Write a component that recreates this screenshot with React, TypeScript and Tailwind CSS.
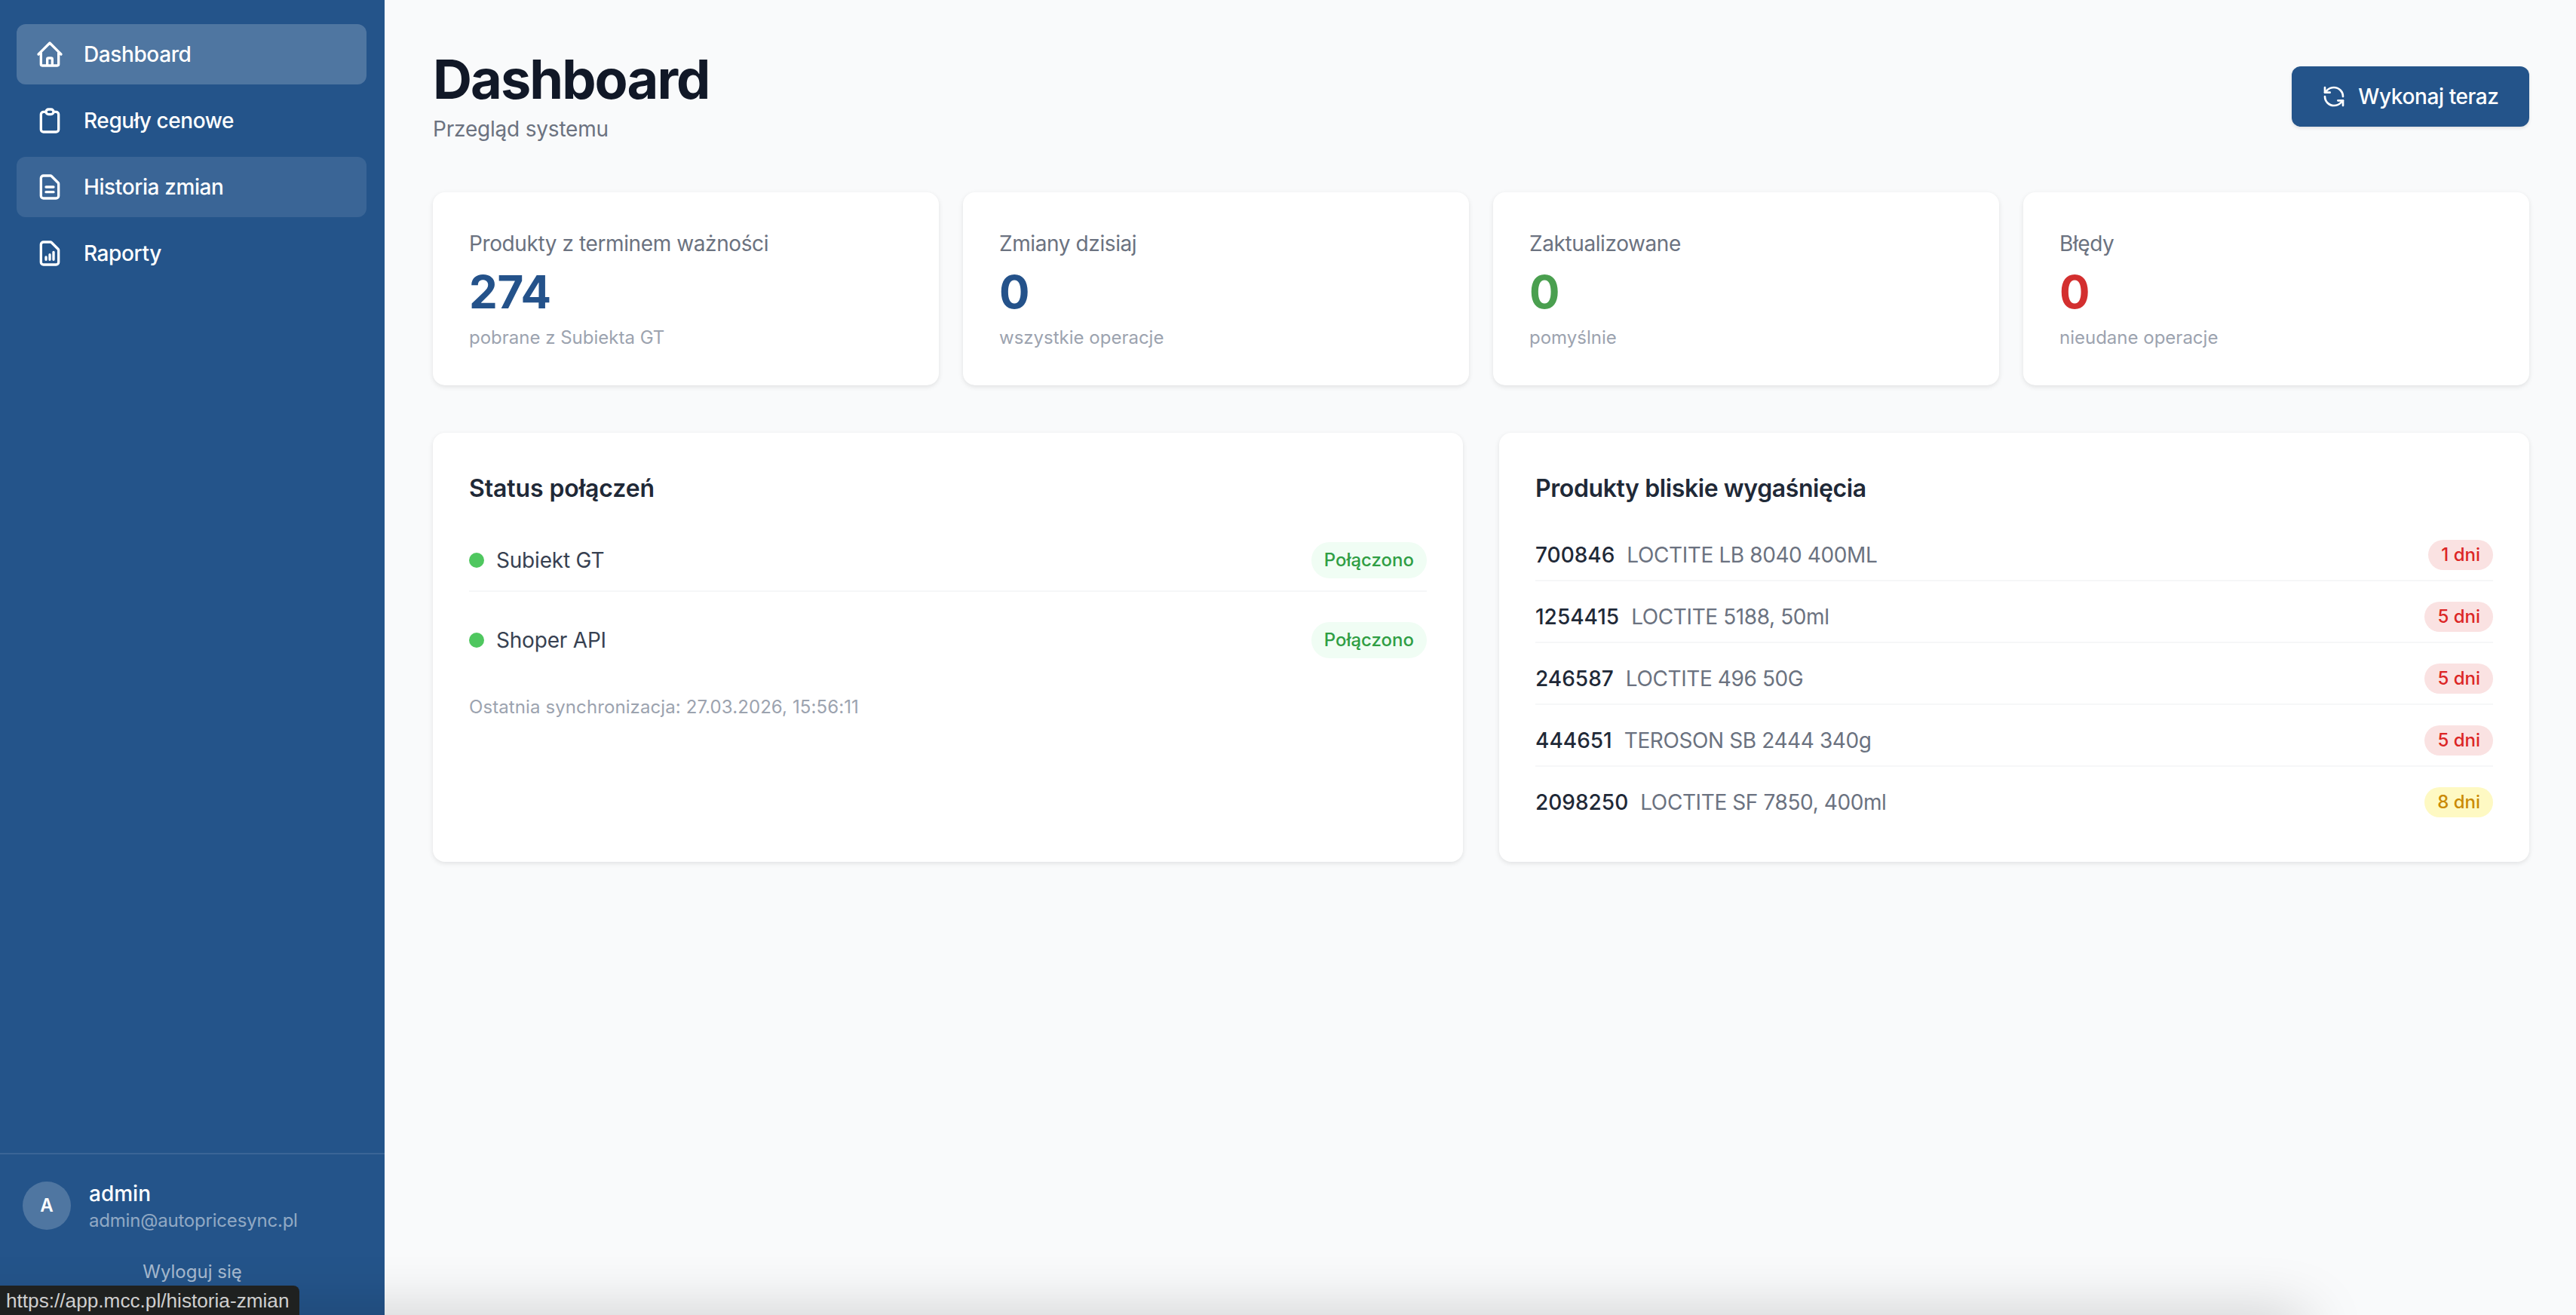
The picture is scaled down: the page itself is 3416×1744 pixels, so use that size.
import { RefreshCcw } from "lucide-react";

const NAV_ITEMS = [
  {
    label: "Dashboard",
    state: "active",
    d: "M3 12l2-2m0 0l7-7 7 7M5 10v10a1 1 0 001 1h3m10-11l2 2m-2-2v10a1 1 0 01-1 1h-3m-6 0a1 1 0 001-1v-4a1 1 0 011-1h2a1 1 0 011 1v4a1 1 0 001 1m-6 0h6",
  },
  {
    label: "Reguły cenowe",
    state: "",
    d: "M9 5H7a2 2 0 00-2 2v12a2 2 0 002 2h10a2 2 0 002-2V7a2 2 0 00-2-2h-2M9 5a2 2 0 002 2h2a2 2 0 002-2M9 5a2 2 0 012-2h2a2 2 0 012 2",
  },
  {
    label: "Historia zmian",
    state: "hover",
    d: "M9 12h6m-6 4h6m2 5H7a2 2 0 01-2-2V5a2 2 0 012-2h5.586a1 1 0 01.707.293l5.414 5.414a1 1 0 01.293.707V19a2 2 0 01-2 2z",
  },
  {
    label: "Raporty",
    state: "",
    d: "M9 17v-2m3 2v-4m3 4v-6m2 10H7a2 2 0 01-2-2V5a2 2 0 012-2h5.586a1 1 0 01.707.293l5.414 5.414a1 1 0 01.293.707V19a2 2 0 01-2 2z",
  },
];

const STATS = [
  { label: "Produkty z terminem ważności", value: "274", color: "text-[#24528a]", sub: "pobrane z Subiekta GT" },
  { label: "Zmiany dzisiaj", value: "0", color: "text-[#24528a]", sub: "wszystkie operacje" },
  { label: "Zaktualizowane", value: "0", color: "text-[#4a9f4f]", sub: "pomyślnie" },
  { label: "Błędy", value: "0", color: "text-[#d32f2f]", sub: "nieudane operacje" },
];

const PRODUCTS = [
  { code: "700846", name: "LOCTITE LB 8040 400ML", days: "1 dni", warn: false },
  { code: "1254415", name: "LOCTITE 5188, 50ml", days: "5 dni", warn: false },
  { code: "246587", name: "LOCTITE 496 50G", days: "5 dni", warn: false },
  { code: "444651", name: "TEROSON SB 2444 340g", days: "5 dni", warn: false },
  { code: "2098250", name: "LOCTITE SF 7850, 400ml", days: "8 dni", warn: true },
];

const Sidebar = () => (
  <aside className="w-[510px] shrink-0 h-full bg-[#24548a] flex flex-col">
    <nav className="flex-1 flex flex-col gap-2 pl-[22px] pr-6 pt-8">
      {NAV_ITEMS.map((item) => (
        <div
          key={item.label}
          className={`h-20 flex items-center gap-[25px] px-6 rounded-xl text-[28px] font-medium tracking-[-0.4px] text-white ${
            item.state === "active" ? "bg-white/20" : item.state === "hover" ? "bg-white/10" : ""
          }`}
        >
          <svg viewBox="0 0 24 24" fill="none" stroke="currentColor" strokeWidth={2} strokeLinecap="round" strokeLinejoin="round" className="w-10 h-10 shrink-0">
            <path d={item.d} />
          </svg>
          <span>{item.label}</span>
        </div>
      ))}
    </nav>
    <div className="border-t-2 border-white/10 px-[30px] pt-8 h-[215px]">
      <div className="flex items-center gap-6">
        <div className="w-16 h-16 rounded-full bg-white/20 flex items-center justify-center text-white text-2xl font-semibold">
          A
        </div>
        <div>
          <div className="text-[28px] leading-10 font-medium text-white">admin</div>
          <div className="text-2xl leading-8 tracking-[-0.2px] text-white/50">admin@autopricesync.pl</div>
        </div>
      </div>
      <div className="mt-[34px] text-center text-2xl leading-9 text-white/60">Wyloguj się</div>
    </div>
  </aside>
);

const Card = ({ className = "", children }: { className?: string; children: React.ReactNode }) => (
  <div className={`bg-white rounded-2xl shadow-[0_2px_6px_rgba(0,0,0,0.1)] ${className}`}>{children}</div>
);

export default function App() {
  return (
    <div className="relative w-[3416px] h-[1744px] overflow-hidden flex bg-[#f9fafb] font-['Inter',sans-serif]">
      <Sidebar />

      <main className="flex-1 pl-16 pr-[62px] pt-16">
        <div className="flex items-center justify-between mb-[63px]">
          <div>
            <h1 className="text-[72px] leading-[82px] mb-1 font-bold text-[#111827] tracking-[-0.027em]">Dashboard</h1>
            <p className="text-[28px] leading-[42px] tracking-[-0.2px] text-[#6b7280]">Przegląd systemu</p>
          </div>
          <button className="h-20 w-[315px] flex items-center justify-center gap-4 rounded-xl bg-[#24548a] text-white text-[28px] font-medium tracking-[-0.4px] shadow-[0_2px_4px_rgba(0,0,0,0.1)]">
            <RefreshCcw className="w-8 h-8" />
            Wykonaj teraz
          </button>
        </div>

        <div className="grid grid-cols-4 gap-8 mb-[63px]">
          {STATS.map((stat) => (
            <Card key={stat.label} className="h-[256px] px-12 pt-[47px]">
              <div className="text-[28px] leading-[42px] tracking-[-0.4px] text-[#6b7280]">{stat.label}</div>
              <div className={`text-[60px] leading-[86px] font-bold tracking-[-0.3px] ${stat.color}`}>{stat.value}</div>
              <div className="text-2xl leading-9 text-[#9ca3af]">{stat.sub}</div>
            </Card>
          ))}
        </div>

        <div className="grid grid-cols-2 gap-12">
          <Card className="h-[569px] p-12">
            <h2 className="mt-0.5 text-[32px] leading-12 font-semibold tracking-[-0.1px] text-[#1f2937] mb-[47px]">Status połączeń</h2>
            {["Subiekt GT", "Shoper API"].map((name, i) => (
              <div
                key={name}
                className={`flex items-center justify-between ${i === 0 ? "pb-4 mb-10 border-b-2 border-[#f6f7f8]" : ""}`}
              >
                <div className="flex items-center gap-4">
                  <span className="w-5 h-5 rounded-full bg-[#4fc75f]" />
                  <span className="text-[28px] tracking-[-0.2px] text-[#374151]">{name}</span>
                </div>
                <span className="h-12 px-[17px] flex items-center rounded-full bg-[#f0fdf4] text-[#2f9e44] text-2xl font-medium">
                  Połączono
                </span>
              </div>
            ))}
            <p className="mt-[47px] text-2xl leading-9 tracking-[0.1px] text-[#9ca3af]">Ostatnia synchronizacja: 27.03.2026, 15:56:11</p>
          </Card>

          <Card className="h-[569px] p-12">
            <h2 className="mt-0.5 text-[32px] leading-12 font-semibold tracking-[-0.4px] text-[#1f2937] mb-[43px]">Produkty bliskie wygaśnięcia</h2>
            {PRODUCTS.map((product, i) => (
              <div
                key={product.code}
                className={`flex items-center justify-between ${
                  i < PRODUCTS.length - 1 ? "pb-3 mb-[26px] border-b-2 border-[#f6f7f8]" : ""
                }`}
              >
                <div className="flex items-center gap-4 text-[28px] leading-[42px]">
                  <span className="font-medium text-[#1f2937]">{product.code}</span>
                  <span className="tracking-[-0.4px] text-[#6b7280]">{product.name}</span>
                </div>
                <span
                  className={`h-10 px-[17px] flex items-center rounded-full text-2xl font-medium ${
                    product.warn ? "bg-[#fef9c3] text-[#ca8a04]" : "bg-[#fae2e2] text-[#dc2626]"
                  }`}
                >
                  {product.days}
                </span>
              </div>
            ))}
          </Card>
        </div>
      </main>

      {/* window shadow coming up from below the page */}
      <div className="absolute left-[-100px] top-[1750px] w-[3160px] h-10 rounded-[40px] shadow-[0_0_80px_rgba(0,0,0,0.28)] pointer-events-none" />

      {/* browser link preview */}
      <div className="absolute left-0 bottom-0 w-[397px] h-[39px] pl-2 pt-0.5 flex items-center rounded-tr-lg bg-[#1f2120] text-[#cfcfcf] text-[26.2px] font-['Liberation_Sans',sans-serif]">
        https://app.mcc.pl/historia-zmian
      </div>
    </div>
  );
}
